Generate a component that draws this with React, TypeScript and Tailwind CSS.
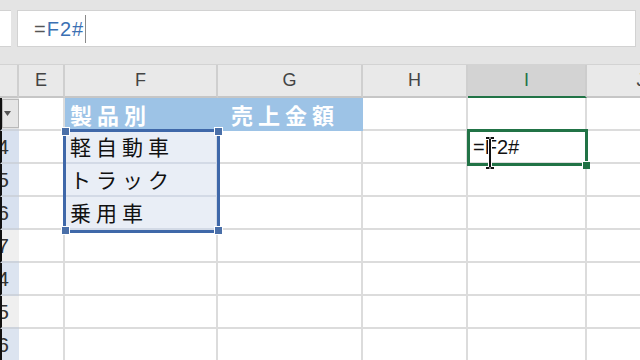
import type { ReactNode } from 'react'

const jp = "font-['Noto_Sans_CJK_JP','Noto_Sans',sans-serif]"

type RowDef = {
  num: string
  headBg: string
  f?: ReactNode
  i?: ReactNode
  filter?: boolean
  band?: boolean
}

const rows: RowDef[] = [
  { num: '', headBg: 'bg-[#e4e4e4]', filter: true, band: true },
  { num: '4', headBg: 'bg-[#d8e1ef]', f: '軽自動車', i: '=F2#' },
  { num: '5', headBg: 'bg-[#d8e1ef]', f: 'トラック' },
  { num: '6', headBg: 'bg-[#d8e1ef]', f: '乗用車' },
  { num: '7', headBg: 'bg-[#efefef]' },
  { num: '4', headBg: 'bg-[#dce4f0]' },
  { num: '5', headBg: 'bg-[#efefef]' },
  { num: '6', headBg: 'bg-[#dce4f0]' },
]

function ColHead({ label, active }: { label: string; active?: boolean }) {
  return (
    <div
      className={
        active
          ? 'h-[33px] flex items-center justify-center bg-[#d3d3d3] border-r-2 border-[#cdcdcd] border-b-2 border-b-[#217346] text-[#217346] text-[18px]'
          : 'h-[33px] flex items-center justify-center bg-[#e9e9e9] border-r-2 border-[#cfcfcf] border-b-2 border-b-[#c6c6c6] text-[#444] text-[18px]'
      }
    >
      {label}
    </div>
  )
}

function IBeam() {
  return (
    <svg width="16" height="34" viewBox="0 0 16 34" className="absolute left-[482px] top-[71px]">
      <g stroke="#fff" strokeWidth="4" fill="none" strokeLinecap="square">
        <path d="M4 2h3M9 2h3M8 3v28M4 32h3M9 32h3" />
      </g>
      <g stroke="#111" strokeWidth="2" fill="none">
        <path d="M4 2h3.5M8.5 2h3.5M8 3v28M4 32h3.5M8.5 32h3.5" />
      </g>
    </svg>
  )
}

export default function App() {
  return (
    <div className="w-[640px] h-[360px] overflow-hidden bg-[#e4e4e4] font-['Liberation_Sans',Arial,sans-serif]">
      {/* formula bar */}
      <div className="h-[10px]" />
      <div className="flex h-[37px]">
        <div className="w-[11px] bg-white border-y border-[#d2d2d2]" />
        <div className="w-[6px]" />
        <div className="flex-1 mr-[4px] bg-white border border-[#d2d2d2] flex items-center pl-[16px]">
          <span className="text-[20px] leading-none tracking-[1px]">
            <span className="text-[#555]">=</span>
            <span className="text-[#3b70b3]">F2#</span>
          </span>
          <span className="ml-[1px] w-px h-[28px] bg-[#8a8a8a]" />
        </div>
      </div>
      <div className="h-[17px]" />

      {/* sheet */}
      <div className="relative w-max border-t border-[#d3d3d3]">
        <div className="grid grid-cols-[19px_46px_153px_145px_105px_119px_110px]">
          <div className="h-[33px] bg-[#e9e9e9] border-r-2 border-[#cfcfcf] border-b-2 border-b-[#c6c6c6]" />
          <ColHead label="E" />
          <ColHead label="F" />
          <ColHead label="G" />
          <ColHead label="H" />
          <ColHead label="I" active />
          <ColHead label="J" />

          {rows.map((r, idx) => (
            <div key={idx} className="contents">
              {/* row header */}
              <div
                className={`h-[33px] ${r.headBg} border-l-2 border-l-[#111] border-b-2 border-b-[#cdd3dc] flex items-center justify-end pr-[10px] overflow-hidden text-[21px] text-[#333]`}
              >
                {r.filter ? (
                  <div className="w-[17px] h-[29px] -mr-[10px] ml-[-2px] bg-[#e6e6e6] border border-[#b9b9b9] flex items-center pl-[1px] self-start mt-[1px]">
                    <svg width="7" height="5" viewBox="0 0 7 5">
                      <path d="M0 0h7L3.5 5z" fill="#555" />
                    </svg>
                  </div>
                ) : (
                  r.num
                )}
              </div>
              {/* E */}
              <div className="h-[33px] bg-white border-r-2 border-b-2 border-[#dcdcdc]" />
              {/* F */}
              {r.band ? (
                <div className={`h-[33px] bg-[#9dc3e6] pl-[5px] flex items-center text-white font-bold text-[22px] tracking-[5px] ${jp}`}>
                  製品別
                </div>
              ) : r.f ? (
                <div className={`h-[33px] bg-[#e9eef6] border-r-2 border-b-2 border-[#d3dae6] pl-[5px] flex items-center text-[#111] text-[21px] tracking-[5px] ${jp}`}>
                  {r.f}
                </div>
              ) : (
                <div className="h-[33px] bg-white border-r-2 border-b-2 border-[#dcdcdc]" />
              )}
              {/* G */}
              {r.band ? (
                <div className={`h-[33px] bg-[#9dc3e6] pl-[13px] flex items-center text-white font-bold text-[22px] tracking-[5px] ${jp}`}>
                  売上金額
                </div>
              ) : (
                <div className="h-[33px] bg-white border-r-2 border-b-2 border-[#dcdcdc]" />
              )}
              {/* H */}
              <div className="h-[33px] bg-white border-r-2 border-b-2 border-[#dcdcdc]" />
              {/* I */}
              <div className="h-[33px] bg-white border-r-2 border-b-2 border-[#dcdcdc] pl-[5px] flex items-center text-[20px] text-[#111]">
                {r.i}
              </div>
              {/* J */}
              <div className="h-[33px] bg-white border-b-2 border-[#dcdcdc]" />
            </div>
          ))}
        </div>

        {/* selected range F4:F6 */}
        <div className="absolute left-[63px] top-[64px] w-[157px] h-[104px] border-[3px] border-[#3f68a9]" />
        <div className="absolute left-[61px] top-[62px] w-[9px] h-[9px] bg-[#4a6fa8] border border-white" />
        <div className="absolute left-[214px] top-[62px] w-[9px] h-[9px] bg-[#4a6fa8] border border-white" />
        <div className="absolute left-[61px] top-[161px] w-[9px] h-[9px] bg-[#4a6fa8] border border-white" />
        <div className="absolute left-[214px] top-[161px] w-[9px] h-[9px] bg-[#4a6fa8] border border-white" />

        {/* active cell I4 */}
        <div className="absolute left-[467px] top-[64px] w-[121px] h-[37px] border-[3px] border-[#217346]" />
        <div className="absolute left-[582px] top-[96px] w-[8px] h-[8px] bg-[#217346] border-l border-t border-white" />

        <IBeam />
      </div>
    </div>
  )
}
